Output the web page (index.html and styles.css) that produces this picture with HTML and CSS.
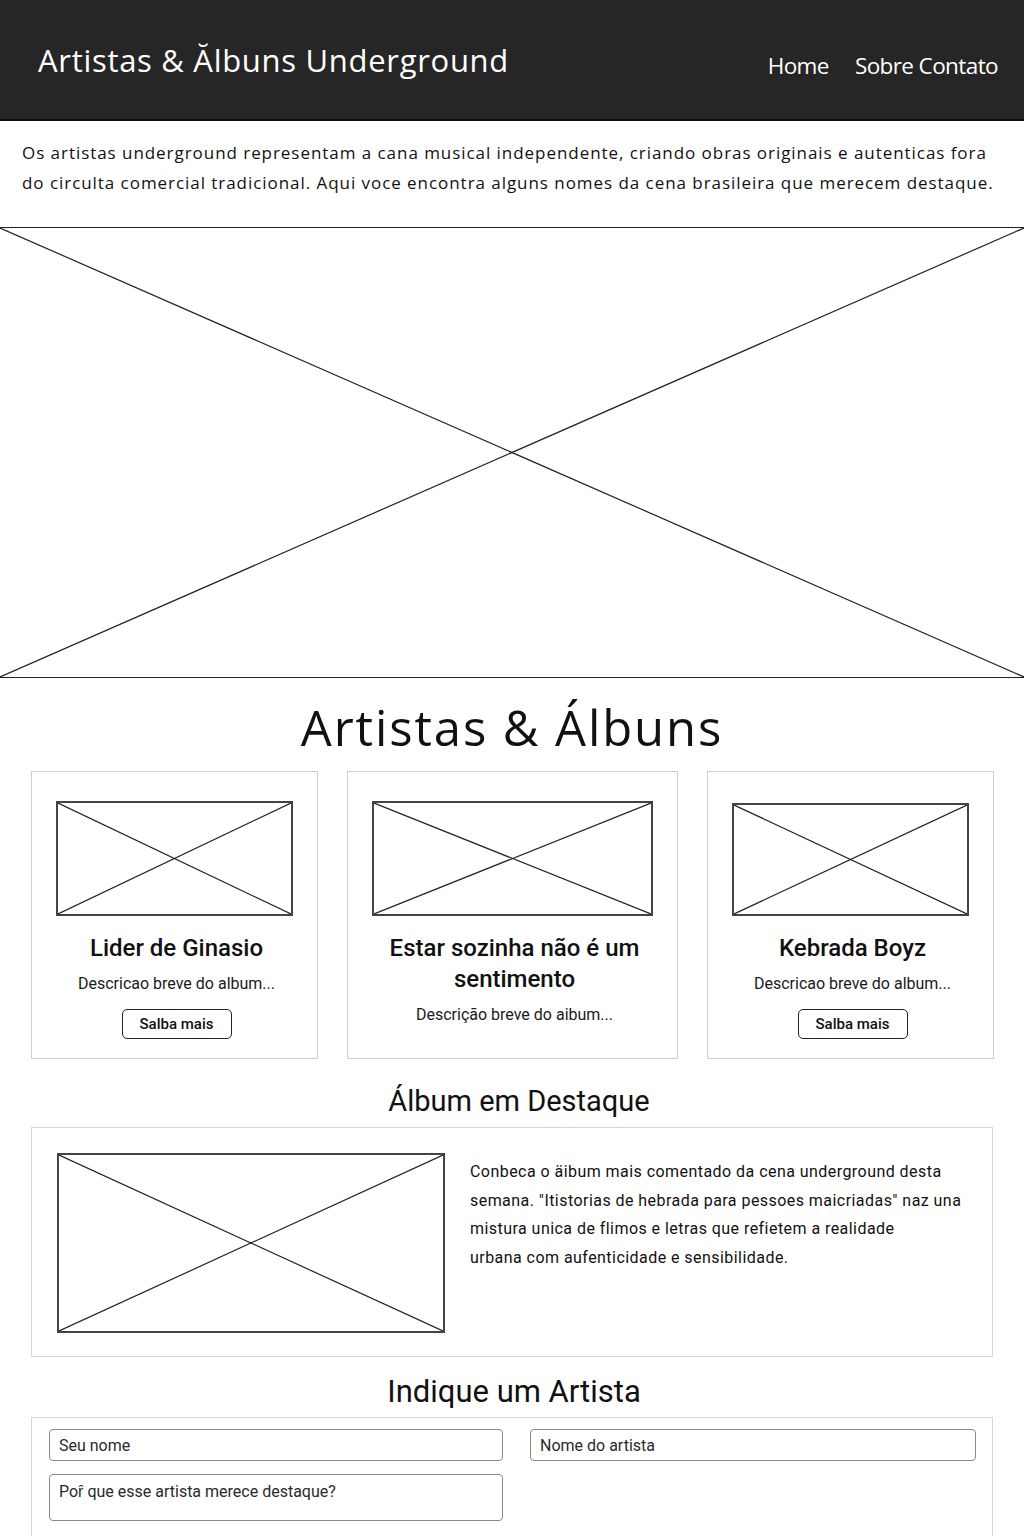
FILE: index.html
```html
<!DOCTYPE html>
<html lang="pt">
<head>
<meta charset="utf-8">
<title>Artistas &amp; Álbuns Underground</title>
<link rel="stylesheet" href="styles.css">
</head>
<body>
<header class="site-header">
  <h1 class="site-title">Artistas &amp; Ălbuns Underground</h1>
  <nav class="site-nav">
    <a href="#">Home</a>
    <a href="#">Sobre Contato</a>
  </nav>
</header>

<p class="intro">Os artistas underground representam a cana musical independente, criando obras originais e autenticas fora do circulta comercial tradicional. Aqui voce encontra alguns nomes da cena brasileira que merecem destaque.</p>

<div class="ph hero">
  <svg viewBox="0 0 100 100" preserveAspectRatio="none"><line x1="0" y1="0" x2="100" y2="100" vector-effect="non-scaling-stroke"/><line x1="100" y1="0" x2="0" y2="100" vector-effect="non-scaling-stroke"/></svg>
</div>

<h2 class="big-title">Artistas &amp; Álbuns</h2>

<section class="cards">
  <article class="card">
    <div class="ph thumb">
      <svg viewBox="0 0 100 100" preserveAspectRatio="none"><line x1="0" y1="0" x2="100" y2="100" vector-effect="non-scaling-stroke"/><line x1="100" y1="0" x2="0" y2="100" vector-effect="non-scaling-stroke"/></svg>
    </div>
    <h3 class="card-title">Lider de Ginasio</h3>
    <p class="card-desc">Descricao breve do album...</p>
    <button class="btn">Salba mais</button>
  </article>
  <article class="card">
    <div class="ph thumb">
      <svg viewBox="0 0 100 100" preserveAspectRatio="none"><line x1="0" y1="0" x2="100" y2="100" vector-effect="non-scaling-stroke"/><line x1="100" y1="0" x2="0" y2="100" vector-effect="non-scaling-stroke"/></svg>
    </div>
    <h3 class="card-title">Estar sozinha não é um sentimento</h3>
    <p class="card-desc">Descrição breve do aibum...</p>
  </article>
  <article class="card">
    <div class="ph thumb thumb-low">
      <svg viewBox="0 0 100 100" preserveAspectRatio="none"><line x1="0" y1="0" x2="100" y2="100" vector-effect="non-scaling-stroke"/><line x1="100" y1="0" x2="0" y2="100" vector-effect="non-scaling-stroke"/></svg>
    </div>
    <h3 class="card-title">Kebrada Boyz</h3>
    <p class="card-desc">Descricao breve do album...</p>
    <button class="btn">Salba mais</button>
  </article>
</section>

<h2 class="section-title">Álbum em Destaque</h2>
<section class="featured box">
  <div class="ph feat-img">
    <svg viewBox="0 0 100 100" preserveAspectRatio="none"><line x1="0" y1="0" x2="100" y2="100" vector-effect="non-scaling-stroke"/><line x1="100" y1="0" x2="0" y2="100" vector-effect="non-scaling-stroke"/></svg>
  </div>
  <p class="feat-text">Conbeca o äibum mais comentado da cena underground desta semana. "Itistorias de hebrada para pessoes maicriadas" naz una mistura unica de flimos e letras que refietem a realidade<br>urbana com aufenticidade e sensibilidade.</p>
</section>

<h2 class="section-title section-title-form">Indique um Artista</h2>
<form class="suggest box">
  <input class="field" type="text" placeholder="Seu nome">
  <input class="field" type="text" placeholder="Nome do artista">
  <textarea class="field area" placeholder="Poȓ que esse artista merece destaque?"></textarea>
</form>
</body>
</html>
```

FILE: styles.css
```css
* { box-sizing: border-box; }

body {
  margin: 0;
  background: #fff;
  color: #111;
  font-family: "Roboto", "Inter", sans-serif;
}

.site-header {
  height: 121px;
  background: #262626;
  border-bottom: 2px solid #111;
  display: flex;
  align-items: center;
  justify-content: space-between;
  padding: 2px 26px 0 38px;
}

.site-title {
  margin: 0 0 2px;
  font-family: "Open Sans", sans-serif;
  font-weight: 400;
  font-size: 31px;
  color: #fff;
  letter-spacing: 0.7px;
}

.site-nav {
  display: flex;
  gap: 26px;
  margin-top: 10px;
}

.site-nav a {
  color: #fff;
  text-decoration: none;
  font-family: "Open Sans", sans-serif;
  font-size: 22.5px;
  letter-spacing: -0.6px;
}

.intro {
  margin: 0;
  padding: 17px 22px 0 22px;
  font-family: "Open Sans", sans-serif;
  font-size: 17px;
  line-height: 30px;
  letter-spacing: 0.95px;
  color: #111;
}

.ph {
  border: 2px solid #444;
}

.ph svg {
  display: block;
  width: 100%;
  height: 100%;
}

.ph line {
  stroke: #222;
  stroke-width: 1.2;
}

.hero {
  margin-top: 29px;
  height: 451px;
  border-width: 1px 0;
  border-color: #222;
}

.big-title {
  margin: 20px 0 15px;
  text-align: center;
  font-family: "Open Sans", sans-serif;
  font-weight: 400;
  font-size: 49px;
  line-height: 58px;
  letter-spacing: 1.9px;
}

.cards {
  display: grid;
  grid-template-columns: 287px 331px 287px;
  column-gap: 29px;
  padding: 0 31px;
}

.card {
  border: 1px solid #cfcfcf;
  padding: 29px 24px 19px;
  display: flex;
  flex-direction: column;
  align-items: center;
  text-align: center;
  min-height: 287px;
}

.thumb {
  width: 100%;
  height: 115px;
}

.thumb-low {
  height: 113px;
  margin-top: 2px;
}

.card-title {
  margin: 17px 0 0 4px;
  font-size: 24px;
  font-weight: 500;
  line-height: 31px;
}

.card-desc {
  margin: 10px 0 0 4px;
  font-size: 16px;
  line-height: 20px;
  color: #1a1a1a;
}

.btn {
  margin: 15px 0 0 4px;
  width: 110px;
  height: 30px;
  background: #fff;
  border: 1.5px solid #222;
  border-radius: 5px;
  font-family: "Roboto", sans-serif;
  font-size: 15px;
  font-weight: 500;
  color: #111;
  padding: 0;
}

.section-title {
  margin: 25px 0 9px;
  text-align: center;
  font-size: 29px;
  font-weight: 400;
  line-height: 34px;
  padding-left: 14px;
}

.section-title-form {
  margin-top: 18px;
  margin-bottom: 8px;
  padding-left: 4px;
  font-size: 31px;
}

.box {
  margin: 0 31px;
  border: 1px solid #d6d6d6;
}

.featured {
  display: flex;
  align-items: flex-start;
  gap: 25px;
  padding: 25px 25px 23px;
}

.feat-img {
  flex: 0 0 388px;
  height: 180px;
}

.feat-text {
  margin: 5px 0 0;
  font-size: 16px;
  line-height: 28.5px;
  letter-spacing: 0.45px;
  color: #111;
}

.suggest {
  display: grid;
  grid-template-columns: 454px 1fr;
  column-gap: 27px;
  row-gap: 13px;
  padding: 11px 16px 40px 17px;
}

.field {
  height: 32px;
  border: 1.5px solid #888;
  border-radius: 4px;
  padding: 0 9px;
  font-family: "Roboto", sans-serif;
  font-size: 16px;
  color: #222;
  background: #fff;
}

.field::placeholder {
  color: #2a2a2a;
}

.area {
  height: 47px;
  padding-top: 7px;
  resize: none;
}
```
